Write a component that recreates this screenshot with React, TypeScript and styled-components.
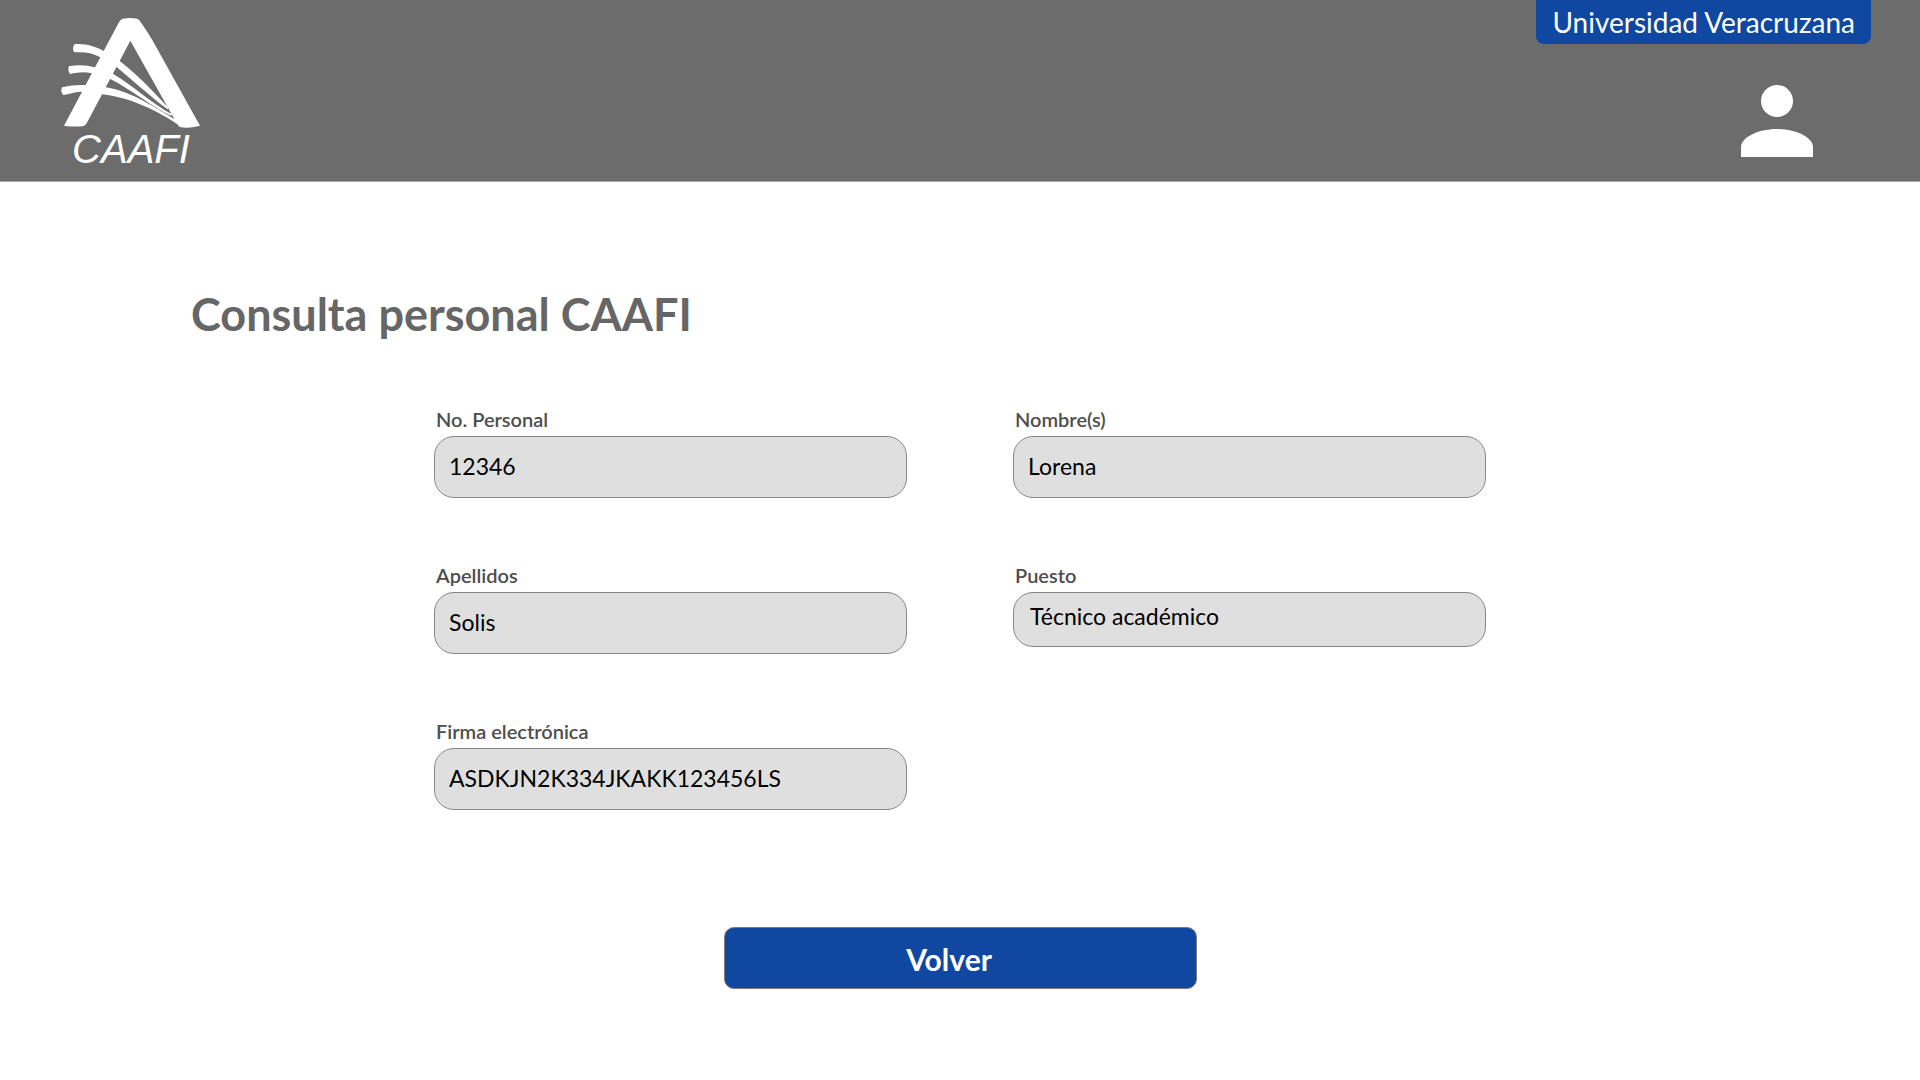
import React from 'react';
import styled, { createGlobalStyle } from 'styled-components';

const GlobalStyle = createGlobalStyle`
  *, *::before, *::after { box-sizing: border-box; }
  body {
    margin: 0;
    background: #ffffff;
    font-family: Lato, "Open Sans", sans-serif;
  }
`;

const Header = styled.header`
  display: flex;
  justify-content: space-between;
  align-items: flex-start;
  height: 182px;
  padding: 0 49px 0 50px;
  background: #6c6c6c;
  border-bottom: 1px solid #a9a9a9;
`;

const HomeLink = styled.a`
  display: block;
  svg { display: block; }
`;

const HeaderSide = styled.div`
  display: flex;
  flex-direction: column;
  align-items: flex-end;
  gap: 41px;
`;

const Badge = styled.div`
  height: 44px;
  padding: 0 16px;
  border-radius: 0 0 8px 8px;
  background: #0f47a1;
  color: #ffffff;
  font-size: 28px;
  line-height: 44px;
`;

const UserButton = styled.button`
  display: block;
  margin-right: 58px;
  padding: 0;
  border: 0;
  background: none;
  cursor: pointer;
  svg { display: block; }
`;

const Main = styled.main`
  padding: 104px 32px 91px;
`;

const Title = styled.h1`
  margin: 0 0 60px 159px;
  color: #666666;
  font-size: 45px;
  font-weight: 700;
  line-height: 56px;
`;

const Form = styled.form`
  max-width: 1052px;
  margin: 0 auto;
`;

const Grid = styled.div`
  display: grid;
  grid-template-columns: 1fr 1fr;
  align-items: start;
  gap: 60px 106px;
`;

const Field = styled.div`
  display: flex;
  flex-direction: column;
`;

const Label = styled.label`
  height: 34px;
  padding-left: 2px;
  color: #4d4d4d;
  font-size: 20px;
  font-weight: 600;
  line-height: 34px;
`;

const Value = styled.input<{ $compact?: boolean }>`
  width: 100%;
  height: ${(p) => (p.$compact ? 55 : 62)}px;
  padding: ${(p) => (p.$compact ? '0 16px 8px' : '0 14px 2px')};
  border: 1px solid #868686;
  border-radius: 20px;
  outline: none;
  background: #dfdfdf;
  color: #000000;
  font-family: inherit;
  font-size: 23px;
`;

const Actions = styled.div`
  display: flex;
  justify-content: center;
  margin-top: 117px;
`;

const BackButton = styled.button`
  width: 473px;
  height: 62px;
  padding: 2px 22px 0 0;
  border: 1px solid #7c7c7c;
  border-radius: 10px;
  background: #0f47a1;
  color: #ffffff;
  font-family: inherit;
  font-size: 30px;
  font-weight: 700;
  cursor: pointer;
`;

function Logo() {
  return (
    <svg width="170" height="181" viewBox="0 0 510 543" fill="#ffffff" role="img" aria-label="CAAFI">
      <path d="M42 377 L206 68 Q212 58 218 56 Q240 52 262 56 Q268 59 274 69 Q295 99 309 124 L450 377 Q412 387 388 380 L378 366 L241 122 L112 366 Q107 376 101 378 Q72 382 42 377Z" />
      <path d="M76 132 C108 130 136 139 160 152 L209 183 C264 225 316 281 355 323 L353 328 C308 295 247 240 199 200 L148 170 C125 158 103 155 74 157 Q65 150 72 134Z" />
      <path d="M60 198 C88 194 114 196 134 202 L190 222 C250 258 312 315 366 343 L363 347 C312 325 244 269 181 237 L122 219 C100 214 82 217 60 222 Q52 210 57 198Z" />
      <path d="M38 262 C62 256 82 254 104 255 L168 262 C250 275 324 330 378 360 L384 374 C324 334 244 293 157 283 L92 275 C72 276 58 282 40 285 Q30 275 36 262Z" />
      <text x="243" y="489" textAnchor="middle" fontFamily="Liberation Sans, Arial, sans-serif" fontStyle="italic" fontSize="120">CAAFI</text>
    </svg>
  );
}

function UserIcon() {
  return (
    <svg width="72" height="72" viewBox="0 0 72 72" fill="#ffffff" aria-hidden="true">
      <circle cx="36" cy="16" r="16" />
      <path d="M0 72V62C0 53 16 44 36 44S72 53 72 62V72Z" />
    </svg>
  );
}

const fields = [
  { id: 'numero', label: 'No. Personal', value: '12346' },
  { id: 'nombre', label: 'Nombre(s)', value: 'Lorena' },
  { id: 'apellidos', label: 'Apellidos', value: 'Solis' },
  { id: 'puesto', label: 'Puesto', value: 'Técnico académico', compact: true },
  { id: 'firma', label: 'Firma electrónica', value: 'ASDKJN2K334JKAKK123456LS' },
];

export default function App() {
  return (
    <>
      <GlobalStyle />
      <Header>
        <HomeLink href="#">
          <Logo />
        </HomeLink>
        <HeaderSide>
          <Badge>Universidad Veracruzana</Badge>
          <UserButton type="button" aria-label="Cuenta">
            <UserIcon />
          </UserButton>
        </HeaderSide>
      </Header>
      <Main>
        <Title>Consulta personal CAAFI</Title>
        <Form onSubmit={(e: React.FormEvent) => e.preventDefault()}>
          <Grid>
            {fields.map((f) => (
              <Field key={f.id}>
                <Label htmlFor={f.id}>{f.label}</Label>
                <Value id={f.id} type="text" value={f.value} $compact={f.compact} readOnly />
              </Field>
            ))}
          </Grid>
          <Actions>
            <BackButton type="button">Volver</BackButton>
          </Actions>
        </Form>
      </Main>
    </>
  );
}
